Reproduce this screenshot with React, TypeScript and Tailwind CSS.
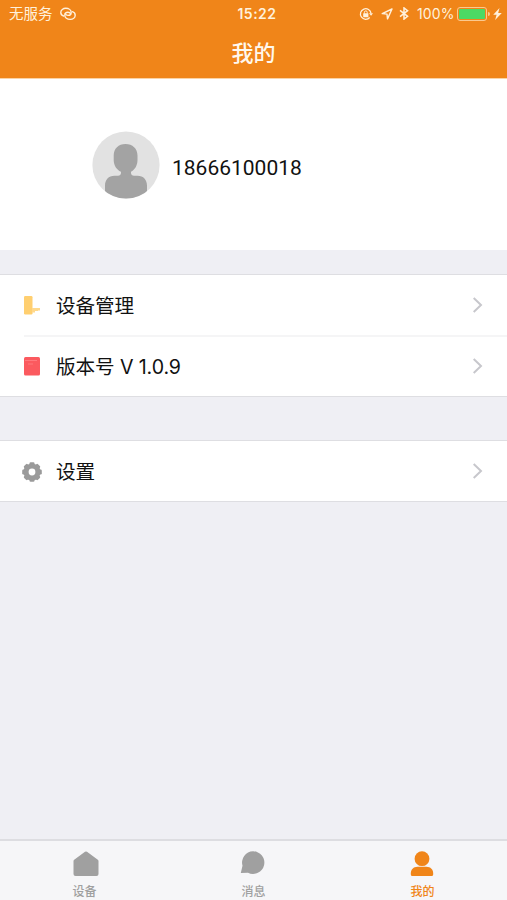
import type { ReactNode } from 'react';

function RotationLock() {
  return (
    <svg className="w-[14px] h-[14px]" viewBox="0 0 14 14" fill="none">
      <path d="M10.700 10.500A5.300 5.300 0 1 1 12 6.400" stroke="currentColor" strokeWidth="1.300" />
      <path d="M10 6.200H14l-1.900 2.500z" fill="currentColor" />
      <rect x="4.200" y="6.200" width="5.200" height="4" rx="0.400" fill="currentColor" />
      <path d="M5.400 6.600V5.300a1.400 1.400 0 0 1 2.800 0v1.300" stroke="currentColor" />
    </svg>
  );
}

function StatusBar() {
  return (
    <div className="relative flex h-[27px] items-center justify-between pl-[9px] pr-[5px] text-[#fff1dc]">
      <div className="flex items-center">
        <span className="mt-[2px] text-[14.5px] leading-none">无服务</span>
        <svg className="ml-[7px] w-[16px] h-[14px]" viewBox="0 0 16 14" fill="none" stroke="currentColor" strokeWidth="1.400" strokeLinecap="round">
          <path d="M3.600 9C1.800 8.400.8 7 .8 5.400c0-2.400 2.300-4.100 5-4.100 3 0 5.400 1.700 5.400 4.100 0 1.700-1.300 3-3.100 3-1.400 0-2.400-.8-2.700-1.800" />
          <path d="M12.400 4.700c1.800.6 2.800 2 2.800 3.600 0 2.400-2.300 4.100-5 4.100-3 0-5.400-1.700-5.400-4.100 0-1.700 1.300-3 3.100-3 1.400 0 2.400.8 2.700 1.800" />
        </svg>
      </div>

      <span className="absolute left-[257px] -translate-x-1/2 text-[14px] leading-none font-semibold tracking-[0.5px]">
        15:22
      </span>

      <div className="flex items-center">
        <RotationLock />
        <svg className="ml-[8px] w-[12px] h-[12px]" viewBox="0 0 12 12" fill="none">
          <path d="M11 1 1.200 5.600l4.800.5.500 4.800z" stroke="currentColor" strokeWidth="1.400" strokeLinejoin="round" />
        </svg>
        <svg className="ml-[6px] w-[10px] h-[13px]" viewBox="0 0 10 13" fill="none">
          <path d="M1 3.400 8.600 9.300 5 12.100V.9l3.600 2.800L1 9.600" stroke="currentColor" strokeWidth="1.500" />
        </svg>
        <span className="ml-[8px] w-[38px] text-[14px] leading-none tracking-[0.1px]">100%</span>
        <div className="ml-[2px] h-[14px] w-[30px] rounded-[3px] border border-[#fbc98f] p-px">
          <div className="h-full w-full rounded-[1px] bg-[#4cd964]" />
        </div>
        <div className="ml-px h-[4px] w-[2px] rounded-r-full bg-[#fbc98f]" />
        <svg className="ml-[3px] w-[9px] h-[12px]" viewBox="0 0 8 12" preserveAspectRatio="none" fill="currentColor">
          <path d="M5.800 0 .2 6.800h3L1.900 12 7.800 4.900H4.600z" />
        </svg>
      </div>
    </div>
  );
}

function Avatar() {
  return (
    <svg className="w-[68px] h-[68px] shrink-0" viewBox="0 0 68 68">
      <defs>
        <clipPath id="avatar">
          <circle cx="34" cy="34" r="33.6" />
        </clipPath>
      </defs>
      <circle cx="34" cy="34" r="33.6" fill="#e2e2e2" />
      <g clipPath="url(#avatar)" fill="#a3a3a3">
        <path d="M33.500 13c7 0 12 4.500 12 11.500v4.500c0 5.500-2.600 9.600-6.500 11.800V42c0 1.600 1.200 2.700 3 2.700h3.500c6 0 9.500 4 9.500 10V68H13V54.700c0-6 3.500-10 9.500-10H26c1.800 0 3-1.100 3-2.700v-1.200c-4.500-2.200-7.300-6.300-7.300-11.800v-4.500C21.700 17.500 26.500 13 33.500 13z" />
      </g>
    </svg>
  );
}

function DeviceIcon() {
  return (
    <svg className="w-[16px] h-[19px]" viewBox="0 0 16 19">
      <rect width="8.500" height="18.500" rx="1.200" fill="#ffcf70" />
      <path d="M8 12h8v2.600h-2v.4h-3v1.500H8z" fill="#ffd98c" />
    </svg>
  );
}

function VersionIcon() {
  return (
    <svg className="w-[16px] h-[19px]" viewBox="0 0 16 19">
      <rect width="16" height="18.500" rx="1.500" fill="#fb5a5f" />
      <path d="M1 3.500h12M4 7h5" stroke="#ff7d80" strokeWidth="0.900" />
    </svg>
  );
}

function GearIcon() {
  return (
    <svg className="w-[20px] h-[20px] translate-y-px" viewBox="0 0 20 20">
      <g fill="#9a9a9a">
        {[0, 45, 90, 135].map((deg) => (
          <rect key={deg} x="7.500" y="0.200" width="5" height="19.600" rx="1.200" transform={`rotate(${deg} 10 10)`} />
        ))}
        <circle cx="10" cy="10" r="8.600" />
      </g>
      <circle cx="10" cy="10" r="3.400" fill="#fff" />
    </svg>
  );
}

function Row({ icon, label }: { icon: ReactNode; label: string }) {
  return (
    <div className="flex h-[60px] items-center pl-[22px] pr-[24px]">
      <div className="flex w-[20px] justify-center">{icon}</div>
      <span className="ml-[14px] mt-[3px] flex-1 text-[19.600px] leading-none tracking-[-0.1px] text-[#111]">{label}</span>
      <svg className="w-[11px] h-[16px]" viewBox="0 0 11 16" fill="none">
        <path d="M1.700 1 9 8l-7.300 7" stroke="#c7c7cc" strokeWidth="2" />
      </svg>
    </div>
  );
}

function Tab({ icon, label, active }: { icon: ReactNode; label: string; active?: boolean }) {
  return (
    <div className={`flex flex-1 flex-col items-center pt-[10px] ${active ? 'text-[#f08519]' : 'text-[#a0a0a0]'}`}>
      {icon}
      <span className="mt-[8px] text-[12px] leading-[14px] font-medium">{label}</span>
    </div>
  );
}

export default function App() {
  return (
    <div className="flex h-[900px] w-full flex-col overflow-hidden bg-[#efeff4] font-['Inter','Noto_Sans_CJK_SC',sans-serif]">
      <header className="h-[79px] shrink-0 border-b border-[#fbd3a5] bg-[#f08519]">
        <StatusBar />
        <h1 className="pt-[15px] text-center text-[22px] leading-[22px] font-medium text-[#fff8ee]">我的</h1>
      </header>

      {/* Profile */}
      <section className="flex h-[171px] shrink-0 items-center bg-white pl-[92px]">
        <Avatar />
        <span className="ml-[12px] mt-[8px] font-['Roboto',sans-serif] text-[21px] leading-none text-[#111]">
          18666100018
        </span>
      </section>

      {/* Menu */}
      <section className="mt-[24px] shrink-0 border-y border-[#dedee2] bg-white">
        <Row icon={<DeviceIcon />} label="设备管理" />
        <div className="-mb-px ml-[24px] h-[2px] bg-[#f5f5f6]" />
        <Row icon={<VersionIcon />} label="版本号 V 1.0.9" />
      </section>
      <section className="mt-[43px] shrink-0 border-y border-[#dedee2] bg-white">
        <Row icon={<GearIcon />} label="设置" />
      </section>

      <nav className="mt-auto flex h-[61px] shrink-0 border-t-2 border-[#dddde1] bg-[#f6f6f8]">
        <Tab
          label="设备"
          icon={
            <svg className="w-[26px] h-[26px] translate-x-px" viewBox="0 0 26 26" fill="currentColor">
              <path d="M12 .8a1.600 1.600 0 0 1 2 0l10.800 8q.7.500.7 1.400v12.800a2 2 0 0 1-2 2h-21a2 2 0 0 1-2-2V10.200q0-.9.7-1.400z" />
            </svg>
          }
        />
        <Tab
          label="消息"
          icon={
            <svg className="w-[26px] h-[26px] -translate-x-px" viewBox="0 0 26 26" fill="currentColor">
              <path d="M13 .3a11.300 11.300 0 1 1-5 21.400L.8 22l1.700-7.200A11.300 11.300 0 0 1 13 .3z" />
            </svg>
          }
        />
        <Tab
          active
          label="我的"
          icon={
            <svg className="w-[26px] h-[26px] -translate-x-px" viewBox="0 0 26 26" fill="currentColor">
              <circle cx="13" cy="7.700" r="7.400" />
              <path d="M8.500 15.800h9c4 0 6.700 2.800 6.700 6.700v.7c0 1.200-.8 1.900-1.900 1.900H3.700c-1.100 0-1.900-.7-1.900-1.900v-.7c0-3.900 2.700-6.700 6.700-6.700z" />
            </svg>
          }
        />
      </nav>
    </div>
  );
}
